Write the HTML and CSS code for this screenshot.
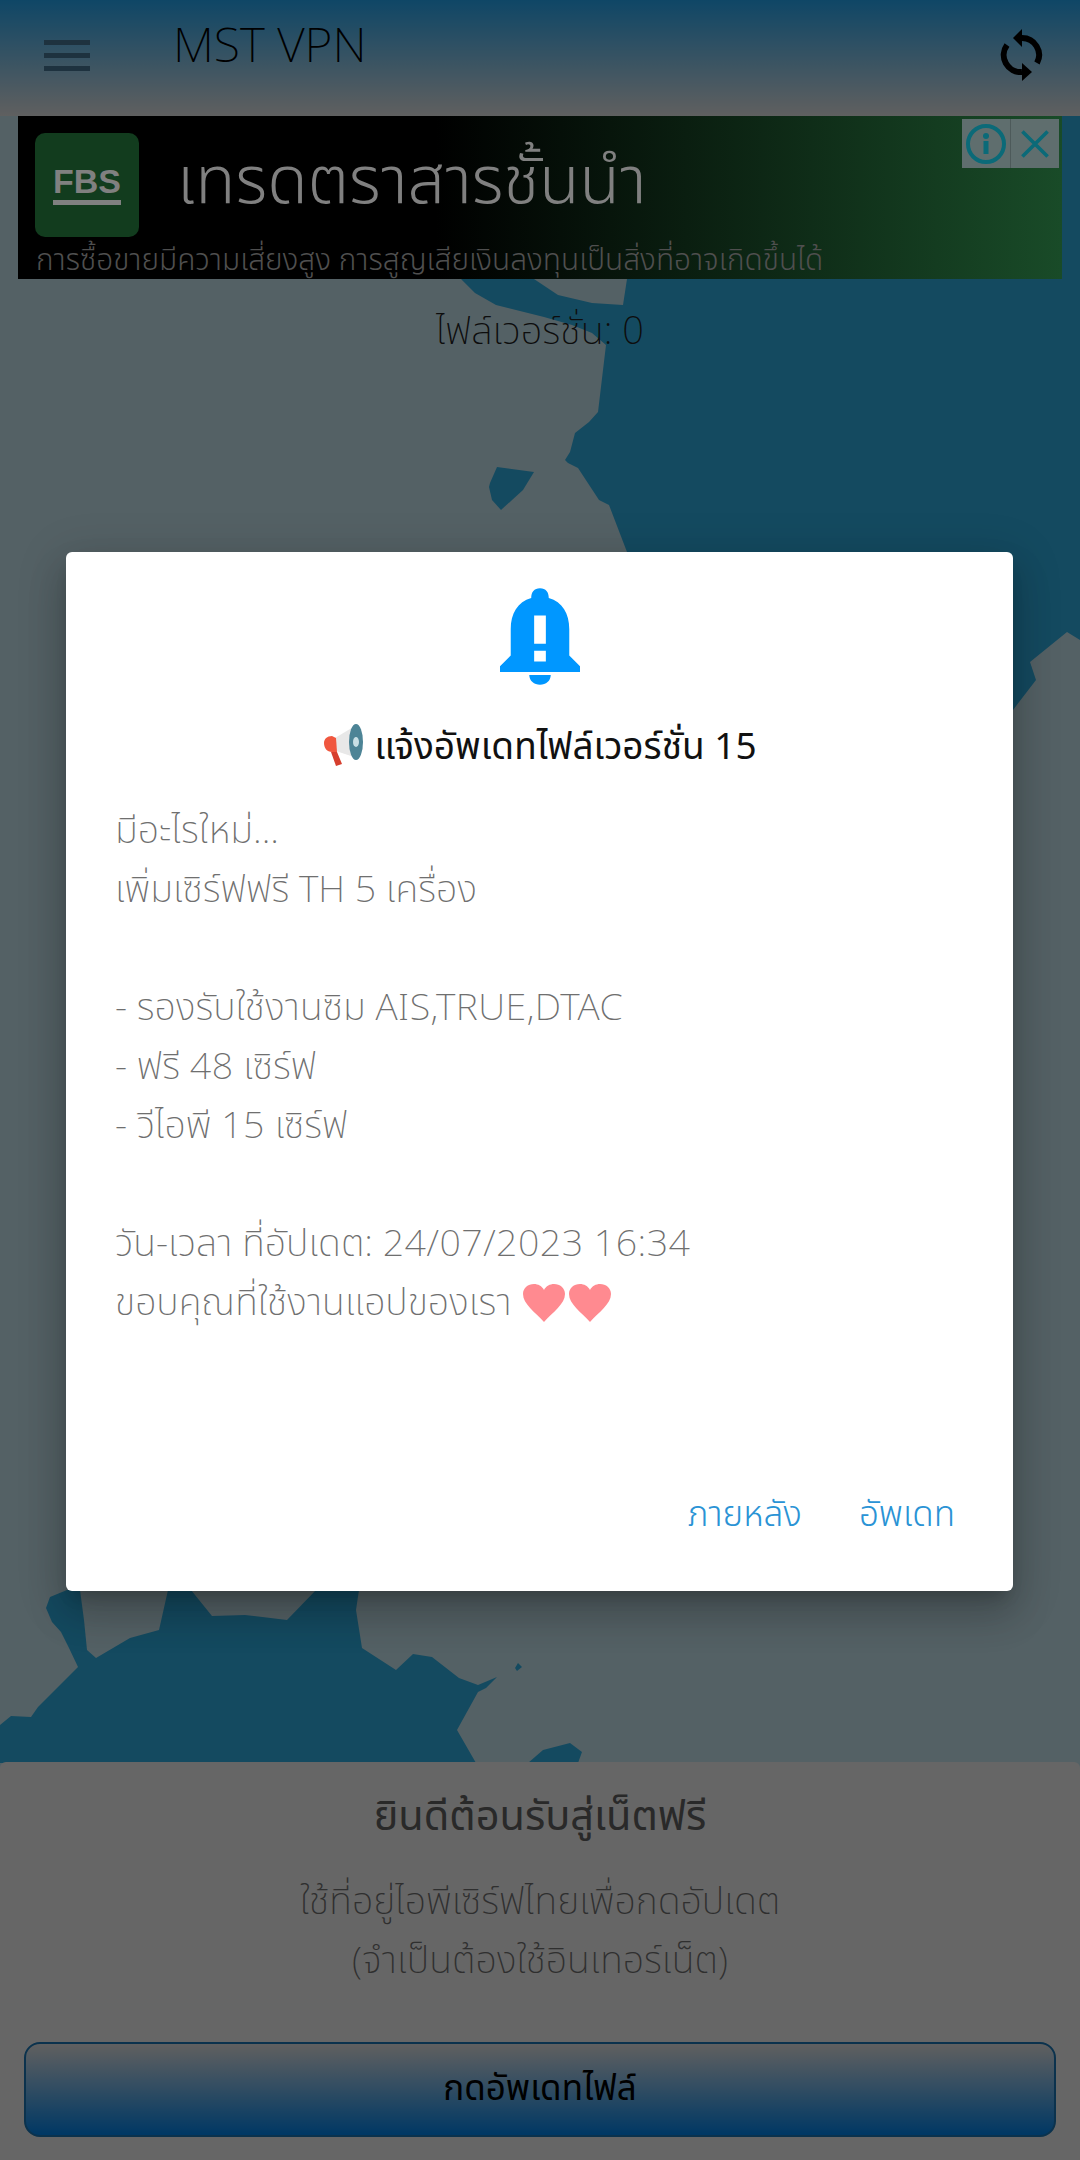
FILE: index.html
```html
<!DOCTYPE html>
<html lang="th">
<head>
<meta charset="utf-8">
<title>MST VPN</title>
<link rel="stylesheet" href="styles.css">
</head>
<body>
<div class="app">
  <svg class="map" viewBox="0 0 1080 2160" width="1080" height="2160" aria-hidden="true">
    <path class="sea" d="M461 279 L475 293 L496 305 L544 317 L572 325 L592 333 L606 345 L603 370 L598 412 L589 422 L575 433 L570 452 L565 460 L568 463 L578 468 L599 500 L609 505 L627 552 L640 552 L640 600 L1013 710 L1036 680 L1030 662 L1067 632 L1080 640 L1080 100 L627 100 L627 279 L623 305 L592 303 L558 295 L534 279 Z"/>
    <path class="sea" d="M489 487 L490 483 L497 467 L534 472 L523 490 L501 510 L492 500 Z"/>
    <path class="sea" d="M67 1590 L50 1597 L46 1608 L52 1622 L61 1632 L69 1648 L78 1667 L38 1707 L31 1717 L11 1716 L0 1725 L0 1763 L476 1763 L457 1730 L478 1692 L486 1688 L497 1677 L478 1685 L459 1678 L432 1657 L413 1654 L396 1670 L362 1648 L356 1610 L359 1590 L316 1590 L287 1620 L245 1615 L212 1616 L191 1590 L168 1590 L159 1630 L130 1638 L96 1658 L87 1650 L84 1620 L80 1590 Z"/>
    <path class="sea" d="M528 1763 L543 1750 L570 1743 L582 1752 L578 1763 Z"/>
    <path class="sea" d="M515 1668 L518 1663 L522 1667 L517 1671 Z"/>
  </svg>

  <header class="topbar">
    <div class="menu-icon"><span></span><span></span><span></span></div>
    <div class="brand">MST VPN</div>
    <svg class="sync" viewBox="0 0 62 62" width="62" height="62" aria-hidden="true">
      <path class="sync-arc" d="M31 14 A17 17 0 0 1 46 39"/>
      <path class="sync-arc" d="M16 21 A17 17 0 0 0 31 48"/>
      <path d="M22 14 L31 5 L31 23 Z"/>
      <path d="M41 48 L31 39 L31 57 Z"/>
    </svg>
  </header>

  <div class="ad">
    <div class="ad-main">
      <div class="ad-logo"><span class="ad-logo-text">FBS</span></div>
      <div class="ad-headline">เทรดตราสารชั้นนำ</div>
    </div>
    <div class="ad-note">การซื้อขายมีความเสี่ยงสูง การสูญเสียเงินลงทุนเป็นสิ่งที่อาจเกิดขึ้นได้</div>
    <div class="ad-badge">
      <div class="ad-badge-cell">
        <svg viewBox="0 0 40 40" width="40" height="40" aria-hidden="true">
          <circle class="ad-stroke" cx="20" cy="20" r="18"/>
          <rect class="ad-fill" x="17.5" y="17" width="5" height="13"/>
          <circle class="ad-fill" cx="20" cy="12" r="3"/>
        </svg>
      </div>
      <div class="ad-badge-cell">
        <svg viewBox="0 0 40 40" width="36" height="36" aria-hidden="true">
          <path class="ad-stroke" d="M6 6 L34 34 M34 6 L6 34"/>
        </svg>
      </div>
    </div>
  </div>

  <div class="version">ไฟล์เวอร์ชั่น: 0</div>

  <section class="panel">
    <h2 class="panel-title">ยินดีต้อนรับสู่เน็ตฟรี</h2>
    <p class="panel-text">ใช้ที่อยู่ไอพีเซิร์ฟไทยเพื่อกดอัปเดต<br>(จำเป็นต้องใช้อินเทอร์เน็ต)</p>
    <div class="panel-button">กดอัพเดทไฟล์</div>
  </section>

  <div class="overlay">
    <div class="dialog">
      <svg class="bell" viewBox="0 0 82 100" width="80" height="100" aria-hidden="true">
        <path class="bell-fill" d="M41 0 C47 0 50 4 50 10 C64 14 71 26 71 42 L71 69 L82 80 L82 86 L0 86 L0 80 L11 69 L11 42 C11 26 18 14 32 10 C32 4 35 0 41 0 Z M35 28 L35 57 L47 57 L47 28 Z M35 64 L35 75 L47 75 L47 64 Z"/>
        <path class="bell-fill" d="M30 89 L52 89 C52 95 47 99 41 99 C35 99 30 95 30 89 Z"/>
      </svg>
      <h3 class="dialog-title">
        <svg class="megaphone" viewBox="0 0 42 42" width="42" height="42" aria-hidden="true">
          <path fill="#e8e8e8" d="M13 14 L33 2 L35 34 L14 27 Z"/>
          <path fill="#f0573f" d="M2 19 C2 15 5 12 10 12 L14 14 L15 28 L10 28 C5 28 2 24 2 19 Z"/>
          <path fill="#d63f2e" d="M9 28 L15 28 L20 40 L14 42 Z"/>
          <ellipse cx="34" cy="18" rx="7" ry="18" fill="#4d8496"/>
          <ellipse cx="34" cy="18" rx="3" ry="5" fill="#c9dfe5"/>
        </svg>
        <span>แจ้งอัพเดทไฟล์เวอร์ชั่น 15</span>
      </h3>
      <div class="dialog-body">
        <div class="line">มีอะไรใหม่...</div>
        <div class="line">เพิ่มเซิร์ฟฟรี TH 5 เครื่อง</div>
        <div class="line">&nbsp;</div>
        <div class="line">- รองรับใช้งานซิม <span class="latin">AIS,TRUE,DTAC</span></div>
        <div class="line">- ฟรี <span class="latin">48</span> เซิร์ฟ</div>
        <div class="line">- วีไอพี <span class="latin">15</span> เซิร์ฟ</div>
        <div class="line">&nbsp;</div>
        <div class="line">วัน-เวลา ที่อัปเดต: <span class="latin">24/07/2023 16:34</span></div>
        <div class="line">ขอบคุณที่ใช้งานแอปของเรา
          <svg class="hearts" viewBox="0 0 88 38" width="88" height="38" aria-hidden="true">
            <path class="heart" d="M21 38 C12 28 0 20 0 10 C0 4 5 0 11 0 C15 0 19 2 21 6 C23 2 27 0 31 0 C37 0 42 4 42 10 C42 20 30 28 21 38 Z"/>
            <path class="heart" d="M67 38 C58 28 46 20 46 10 C46 4 51 0 57 0 C61 0 65 2 67 6 C69 2 73 0 77 0 C83 0 88 4 88 10 C88 20 76 28 67 38 Z"/>
          </svg>
        </div>
      </div>
      <div class="dialog-actions">
        <span class="action">ภายหลัง</span>
        <span class="action">อัพเดท</span>
      </div>
    </div>
  </div>
</div>
</body>
</html>
```
FILE: styles.css
```css
* { box-sizing: border-box; }
html, body { margin: 0; padding: 0; }
body { font-family: "Noto Sans", "Noto Sans Thai", "Open Sans", "DejaVu Sans", sans-serif; font-weight: 200; }
.app {
  position: relative;
  width: 1080px;
  height: 2160px;
  overflow: hidden;
  display: flex;
  flex-direction: column;
  background: #d2f2fc;
}
.map { position: absolute; left: 0; top: 0; }
.sea { fill: #32b9f0; }

.topbar {
  position: relative;
  height: 116px;
  flex: none;
  display: flex;
  align-items: flex-start;
  background: linear-gradient(#26b0ff, #efefef);
}
.menu-icon {
  width: 46px;
  margin: 40px 0 0 44px;
  display: flex;
  flex-direction: column;
  gap: 8px;
}
.menu-icon span { display: block; height: 5px; background: #4c7e9f; }
.brand {
  margin: 14px 0 0 83px;
  font-size: 48px;
  line-height: 60px;
  font-weight: 200;
  color: #000;
}
.sync { margin: 24px 27px 0 auto; }
.sync-arc { fill: none; stroke: #000; stroke-width: 6; }

.ad {
  position: relative;
  z-index: 2;
  flex: none;
  height: 163px;
  margin: 0 18px;
  background: linear-gradient(90deg, #000 0%, #000 40%, #194b28 100%);
  color: #808080;
}
.ad-main { display: flex; align-items: center; padding: 17px 0 0 17px; gap: 38px; }
.ad-logo {
  width: 104px;
  height: 104px;
  border-radius: 10px;
  background: #123c1e;
  display: flex;
  align-items: center;
  justify-content: center;
}
.ad-logo-text {
  font: 700 34px "Liberation Sans", sans-serif;
  line-height: 30px;
  border-bottom: 5px solid #808080;
  padding-bottom: 4px;
}
.ad-headline { font-size: 66px; line-height: 80px; font-weight: 300; position: relative; top: -8px; }
.ad-note { position: absolute; left: 18px; top: 124px; font-size: 29.8px; line-height: 38px; color: #4f4f4f; font-weight: 300; }
.ad-badge {
  position: absolute;
  right: 3px;
  top: 3px;
  height: 49px;
  width: 97px;
  display: flex;
  background: #5f6e6e;
}
.ad-badge-cell { flex: 1; display: flex; align-items: center; justify-content: center; }
.ad-badge-cell + .ad-badge-cell { border-left: 1px solid #4d5a5a; }
.ad-stroke { fill: none; stroke: #0b6a78; stroke-width: 4; }
.ad-fill { fill: #0b6a78; }

.version {
  position: relative;
  flex: none;
  margin-top: 28px;
  text-align: center;
  font-size: 38px;
  line-height: 44px;
  color: #222;
}
.panel {
  position: absolute;
  left: 0;
  right: 0;
  bottom: 0;
  height: 398px;
  background: #fff;
  border-radius: 6px 6px 0 0;
  text-align: center;
  display: flex;
  flex-direction: column;
  padding: 26px 24px 23px;
}
.panel-title { margin: 0; font-size: 41.5px; line-height: 52px; font-weight: 400; color: #666; }
.panel-text { margin: 30px 0 0; font-size: 37.6px; line-height: 59px; color: #777; }
.panel-button {
  margin-top: auto;
  height: 95px;
  border: 2px solid #1c7ec0;
  border-radius: 16px;
  display: flex;
  align-items: center;
  justify-content: center;
  font-size: 35px;
  font-weight: 400;
  color: #000;
  background: linear-gradient(#f0f0f0, #008cfa);
}

.overlay {
  position: absolute;
  z-index: 1;
  inset: 0;
  background: rgba(0, 0, 0, .6);
  padding: 552px 67px 0 66px;
}
.dialog {
  height: 1039px;
  background: #fff;
  border-radius: 6px;
  box-shadow: 0 11px 15px -7px rgba(0,0,0,.2), 0 24px 38px 3px rgba(0,0,0,.14), 0 9px 46px 8px rgba(0,0,0,.12);
  display: flex;
  flex-direction: column;
  align-items: center;
  position: relative;
}
.bell { margin-top: 35px; }
.bell-fill { fill: #0097ff; }
.dialog-title {
  margin: 33px 0 0;
  display: flex;
  align-items: center;
  gap: 10px;
  font-size: 37px;
  line-height: 50px;
  font-weight: 400;
  color: #111;
}
.dialog-body {
  align-self: stretch;
  margin-top: 29px;
  padding-left: 49px;
  font-size: 37.5px;
  line-height: 59px;
  color: #6f6f6f;
}
.latin { letter-spacing: .5px; }
.hearts { vertical-align: -7px; margin-left: 2px; }
.heart { fill: #ff8a90; }
.dialog-actions {
  margin-top: auto;
  align-self: flex-end;
  display: flex;
  gap: 57px;
  padding: 0 58px 53px 0;
  font-size: 35px;
  line-height: 50px;
  font-weight: 300;
  color: #2a93d5;
}
```
